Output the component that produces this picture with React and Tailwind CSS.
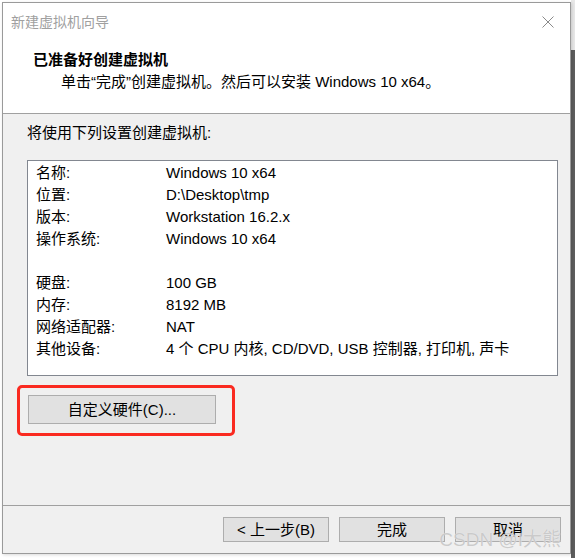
import React from "react";

const rows = [
  ["名称:", "Windows 10 x64"],
  ["位置:", "D:\\Desktop\\tmp"],
  ["版本:", "Workstation 16.2.x"],
  ["操作系统:", "Windows 10 x64"],
  ["", ""],
  ["硬盘:", "100 GB"],
  ["内存:", "8192 MB"],
  ["网络适配器:", "NAT"],
  ["其他设备:", "4 个 CPU 内核, CD/DVD, USB 控制器, 打印机, 声卡"],
];

function WinButton({ children, className = "" }) {
  return (
    <button
      className={`flex items-center justify-center bg-[#e1e1e1] border border-[#adadad] text-black text-[15px] leading-none ${className}`}
    >
      {children}
    </button>
  );
}

export default function App() {
  return (
    <div className="w-[575px] h-[558px] flex bg-white overflow-hidden font-['Liberation_Sans','Noto_Sans_CJK_SC',sans-serif] text-black">
      <div className="w-[2px] shrink-0" />
      <div className="flex flex-col w-[569px] shrink-0 pt-[2px]">
        <div className="relative flex flex-col h-[552px] border border-[#9a9a9a] bg-[#f0f0f0] shadow-[1px_1px_3px_rgba(0,0,0,0.15)]">
          {/* title bar + header */}
          <div className="bg-white">
            <div className="h-[38px] flex items-center justify-between pl-[8px] pr-[14px]">
              <span className="text-[14px] text-[#a0a0a0]">新建虚拟机向导</span>
              <svg width="14" height="14" viewBox="0 0 14 14" className="mr-[1px]">
                <path d="M1.5 1.5 L12.5 12.5 M12.5 1.5 L1.5 12.5" stroke="#8a8a8a" strokeWidth="1" fill="none" />
              </svg>
            </div>
            <div className="h-[72px] pl-[30px] pt-[9px]">
              <div className="text-[15px] font-bold leading-[20px]">已准备好创建虚拟机</div>
              <div className="text-[15px] leading-[20px] mt-[2px] pl-[28px]">
                单击“完成”创建虚拟机。然后可以安装 Windows 10 x64。
              </div>
            </div>
          </div>
          <div className="h-px bg-[#a0a0a0]" />

          {/* body */}
          <div className="h-[391px] pl-[24px] pr-[12px] pt-[9px]">
            <div className="text-[15px] leading-[20px]">将使用下列设置创建虚拟机:</div>
            <div className="mt-[17px] h-[216px] bg-white border border-[#828790] pt-[1px] pl-[8px]">
              {rows.map(([k, v], i) => (
                <div key={i} className="flex h-[22px] items-center text-[15px]">
                  <span className="w-[130px] shrink-0">{k}</span>
                  <span>{v}</span>
                </div>
              ))}
            </div>
            <div className="relative mt-[19px] ml-[1px] w-[188px]">
              <WinButton className="w-[188px] h-[29px]">自定义硬件(C)...</WinButton>
              <div className="absolute left-[-11px] right-[-19px] top-[-10px] bottom-[-12px] border-[3px] border-[#fa2a20] rounded-[5px] pointer-events-none" />
            </div>
          </div>
          <div className="h-px bg-[#a0a0a0]" />

          {/* footer */}
          <div className="flex-1 flex justify-end gap-[10px] pt-[11px] pr-[9px]">
            <WinButton className="w-[106px] h-[25px]">&lt; 上一步(B)</WinButton>
            <WinButton className="w-[106px] h-[25px]">完成</WinButton>
            <WinButton className="w-[106px] h-[25px]">取消</WinButton>
          </div>

          <div className="absolute right-[9px] bottom-[4px] text-[19px] leading-none text-[#c8c8c8] opacity-90 pointer-events-none [text-shadow:0_0_1px_#ffffff]">
            CSDN @I大熊
          </div>
        </div>
      </div>
      <div className="w-[4px] shrink-0 flex flex-col">
        <div className="h-[50px] bg-[#e8e8e8]" />
        <div className="flex-1 bg-[#5e5e5e]" />
      </div>
    </div>
  );
}
